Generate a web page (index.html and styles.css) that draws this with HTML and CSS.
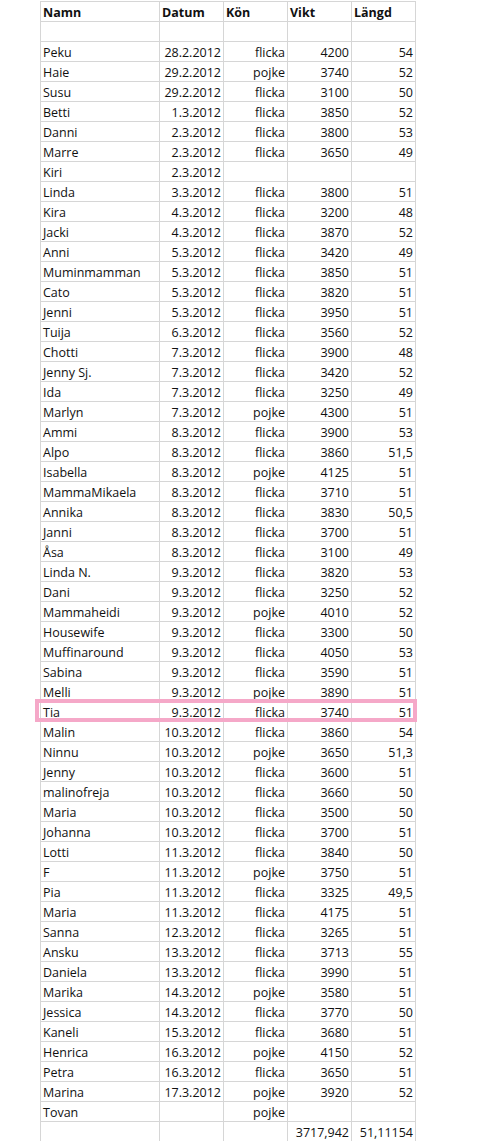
FILE: index.html
```html
<!DOCTYPE html>
<html lang="sv">
<head>
<meta charset="utf-8">
<title>Namn</title>
<link rel="stylesheet" href="styles.css">
</head>
<body>
<div class="sheet">
  <div class="row head"><div class="c">Namn</div><div class="c">Datum</div><div class="c">Kön</div><div class="c">Vikt</div><div class="c">Längd</div></div>
  <div class="row"><div class="c"></div><div class="c"></div><div class="c"></div><div class="c"></div><div class="c"></div></div>
  <div class="row"><div class="c">Peku</div><div class="c r">28.2.2012</div><div class="c r">flicka</div><div class="c r">4200</div><div class="c r">54</div></div>
  <div class="row"><div class="c">Haie</div><div class="c r">29.2.2012</div><div class="c r">pojke</div><div class="c r">3740</div><div class="c r">52</div></div>
  <div class="row"><div class="c">Susu</div><div class="c r">29.2.2012</div><div class="c r">flicka</div><div class="c r">3100</div><div class="c r">50</div></div>
  <div class="row"><div class="c">Betti</div><div class="c r">1.3.2012</div><div class="c r">flicka</div><div class="c r">3850</div><div class="c r">52</div></div>
  <div class="row"><div class="c">Danni</div><div class="c r">2.3.2012</div><div class="c r">flicka</div><div class="c r">3800</div><div class="c r">53</div></div>
  <div class="row"><div class="c">Marre</div><div class="c r">2.3.2012</div><div class="c r">flicka</div><div class="c r">3650</div><div class="c r">49</div></div>
  <div class="row"><div class="c">Kiri</div><div class="c r">2.3.2012</div><div class="c r"></div><div class="c r"></div><div class="c r"></div></div>
  <div class="row"><div class="c">Linda</div><div class="c r">3.3.2012</div><div class="c r">flicka</div><div class="c r">3800</div><div class="c r">51</div></div>
  <div class="row"><div class="c">Kira</div><div class="c r">4.3.2012</div><div class="c r">flicka</div><div class="c r">3200</div><div class="c r">48</div></div>
  <div class="row"><div class="c">Jacki</div><div class="c r">4.3.2012</div><div class="c r">flicka</div><div class="c r">3870</div><div class="c r">52</div></div>
  <div class="row"><div class="c">Anni</div><div class="c r">5.3.2012</div><div class="c r">flicka</div><div class="c r">3420</div><div class="c r">49</div></div>
  <div class="row"><div class="c">Muminmamman</div><div class="c r">5.3.2012</div><div class="c r">flicka</div><div class="c r">3850</div><div class="c r">51</div></div>
  <div class="row"><div class="c">Cato</div><div class="c r">5.3.2012</div><div class="c r">flicka</div><div class="c r">3820</div><div class="c r">51</div></div>
  <div class="row"><div class="c">Jenni</div><div class="c r">5.3.2012</div><div class="c r">flicka</div><div class="c r">3950</div><div class="c r">51</div></div>
  <div class="row"><div class="c">Tuija</div><div class="c r">6.3.2012</div><div class="c r">flicka</div><div class="c r">3560</div><div class="c r">52</div></div>
  <div class="row"><div class="c">Chotti</div><div class="c r">7.3.2012</div><div class="c r">flicka</div><div class="c r">3900</div><div class="c r">48</div></div>
  <div class="row"><div class="c">Jenny Sj.</div><div class="c r">7.3.2012</div><div class="c r">flicka</div><div class="c r">3420</div><div class="c r">52</div></div>
  <div class="row"><div class="c">Ida</div><div class="c r">7.3.2012</div><div class="c r">flicka</div><div class="c r">3250</div><div class="c r">49</div></div>
  <div class="row"><div class="c">Marlyn</div><div class="c r">7.3.2012</div><div class="c r">pojke</div><div class="c r">4300</div><div class="c r">51</div></div>
  <div class="row"><div class="c">Ammi</div><div class="c r">8.3.2012</div><div class="c r">flicka</div><div class="c r">3900</div><div class="c r">53</div></div>
  <div class="row"><div class="c">Alpo</div><div class="c r">8.3.2012</div><div class="c r">flicka</div><div class="c r">3860</div><div class="c r">51,5</div></div>
  <div class="row"><div class="c">Isabella</div><div class="c r">8.3.2012</div><div class="c r">pojke</div><div class="c r">4125</div><div class="c r">51</div></div>
  <div class="row"><div class="c">MammaMikaela</div><div class="c r">8.3.2012</div><div class="c r">flicka</div><div class="c r">3710</div><div class="c r">51</div></div>
  <div class="row"><div class="c">Annika</div><div class="c r">8.3.2012</div><div class="c r">flicka</div><div class="c r">3830</div><div class="c r">50,5</div></div>
  <div class="row"><div class="c">Janni</div><div class="c r">8.3.2012</div><div class="c r">flicka</div><div class="c r">3700</div><div class="c r">51</div></div>
  <div class="row"><div class="c">Åsa</div><div class="c r">8.3.2012</div><div class="c r">flicka</div><div class="c r">3100</div><div class="c r">49</div></div>
  <div class="row"><div class="c">Linda N.</div><div class="c r">9.3.2012</div><div class="c r">flicka</div><div class="c r">3820</div><div class="c r">53</div></div>
  <div class="row"><div class="c">Dani</div><div class="c r">9.3.2012</div><div class="c r">flicka</div><div class="c r">3250</div><div class="c r">52</div></div>
  <div class="row"><div class="c">Mammaheidi</div><div class="c r">9.3.2012</div><div class="c r">pojke</div><div class="c r">4010</div><div class="c r">52</div></div>
  <div class="row"><div class="c">Housewife</div><div class="c r">9.3.2012</div><div class="c r">flicka</div><div class="c r">3300</div><div class="c r">50</div></div>
  <div class="row"><div class="c">Muffinaround</div><div class="c r">9.3.2012</div><div class="c r">flicka</div><div class="c r">4050</div><div class="c r">53</div></div>
  <div class="row"><div class="c">Sabina</div><div class="c r">9.3.2012</div><div class="c r">flicka</div><div class="c r">3590</div><div class="c r">51</div></div>
  <div class="row"><div class="c">Melli</div><div class="c r">9.3.2012</div><div class="c r">pojke</div><div class="c r">3890</div><div class="c r">51</div></div>
  <div class="row hl"><div class="c">Tia</div><div class="c r">9.3.2012</div><div class="c r">flicka</div><div class="c r">3740</div><div class="c r">51</div></div>
  <div class="row"><div class="c">Malin</div><div class="c r">10.3.2012</div><div class="c r">flicka</div><div class="c r">3860</div><div class="c r">54</div></div>
  <div class="row"><div class="c">Ninnu</div><div class="c r">10.3.2012</div><div class="c r">pojke</div><div class="c r">3650</div><div class="c r">51,3</div></div>
  <div class="row"><div class="c">Jenny</div><div class="c r">10.3.2012</div><div class="c r">flicka</div><div class="c r">3600</div><div class="c r">51</div></div>
  <div class="row"><div class="c">malinofreja</div><div class="c r">10.3.2012</div><div class="c r">flicka</div><div class="c r">3660</div><div class="c r">50</div></div>
  <div class="row"><div class="c">Maria</div><div class="c r">10.3.2012</div><div class="c r">flicka</div><div class="c r">3500</div><div class="c r">50</div></div>
  <div class="row"><div class="c">Johanna</div><div class="c r">10.3.2012</div><div class="c r">flicka</div><div class="c r">3700</div><div class="c r">51</div></div>
  <div class="row"><div class="c">Lotti</div><div class="c r">11.3.2012</div><div class="c r">flicka</div><div class="c r">3840</div><div class="c r">50</div></div>
  <div class="row"><div class="c">F</div><div class="c r">11.3.2012</div><div class="c r">pojke</div><div class="c r">3750</div><div class="c r">51</div></div>
  <div class="row"><div class="c">Pia</div><div class="c r">11.3.2012</div><div class="c r">flicka</div><div class="c r">3325</div><div class="c r">49,5</div></div>
  <div class="row"><div class="c">Maria</div><div class="c r">11.3.2012</div><div class="c r">flicka</div><div class="c r">4175</div><div class="c r">51</div></div>
  <div class="row"><div class="c">Sanna</div><div class="c r">12.3.2012</div><div class="c r">flicka</div><div class="c r">3265</div><div class="c r">51</div></div>
  <div class="row"><div class="c">Ansku</div><div class="c r">13.3.2012</div><div class="c r">flicka</div><div class="c r">3713</div><div class="c r">55</div></div>
  <div class="row"><div class="c">Daniela</div><div class="c r">13.3.2012</div><div class="c r">flicka</div><div class="c r">3990</div><div class="c r">51</div></div>
  <div class="row"><div class="c">Marika</div><div class="c r">14.3.2012</div><div class="c r">pojke</div><div class="c r">3580</div><div class="c r">51</div></div>
  <div class="row"><div class="c">Jessica</div><div class="c r">14.3.2012</div><div class="c r">flicka</div><div class="c r">3770</div><div class="c r">50</div></div>
  <div class="row"><div class="c">Kaneli</div><div class="c r">15.3.2012</div><div class="c r">flicka</div><div class="c r">3680</div><div class="c r">51</div></div>
  <div class="row"><div class="c">Henrica</div><div class="c r">16.3.2012</div><div class="c r">pojke</div><div class="c r">4150</div><div class="c r">52</div></div>
  <div class="row"><div class="c">Petra</div><div class="c r">16.3.2012</div><div class="c r">flicka</div><div class="c r">3650</div><div class="c r">51</div></div>
  <div class="row"><div class="c">Marina</div><div class="c r">17.3.2012</div><div class="c r">pojke</div><div class="c r">3920</div><div class="c r">52</div></div>
  <div class="row"><div class="c">Tovan</div><div class="c r"></div><div class="c r">pojke</div><div class="c r"></div><div class="c r"></div></div>
  <div class="row"><div class="c"></div><div class="c r"></div><div class="c r"></div><div class="c r">3717,942</div><div class="c r">51,11154</div></div>
</div>
</body>
</html>
```

FILE: styles.css
```css
html, body {
  margin: 0;
  padding: 0;
  background: #ffffff;
}

body {
  font-family: "Open Sans", "Noto Sans", sans-serif;
  font-size: 12.5px;
  color: #111111;
}

.sheet {
  margin: 1px 0 0 40px;
  width: max-content;
  border-left: 1px solid #d6d6d6;
  border-top: 1px solid #d6d6d6;
}

.row {
  display: grid;
  grid-template-columns: 119px 64px 64px 64px 64px;
  position: relative;
}

.c {
  box-sizing: border-box;
  height: 20px;
  padding: 2px 2px 0 2px;
  line-height: 17px;
  border-right: 1px solid #d6d6d6;
  border-bottom: 1px solid #d6d6d6;
  white-space: nowrap;
  overflow: hidden;
}

.r {
  text-align: right;
}

.head .c {
  font-weight: 700;
  text-align: left;
}

.hl::after {
  content: "";
  position: absolute;
  left: -6px;
  right: -1px;
  top: -3px;
  bottom: 0;
  border: 4px solid #f5a8c8;
  pointer-events: none;
}
```
